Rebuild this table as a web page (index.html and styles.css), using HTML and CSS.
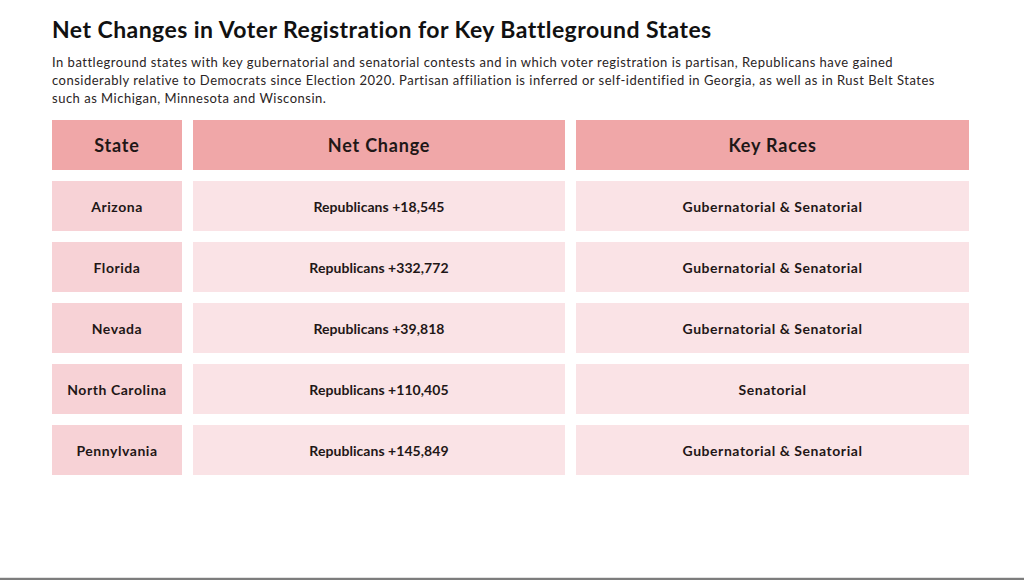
FILE: index.html
```html
<!DOCTYPE html>
<html lang="en">
<head>
<meta charset="utf-8">
<title>Net Changes in Voter Registration</title>
<link rel="stylesheet" href="styles.css">
</head>
<body>
<main class="page">
  <h1 class="title">Net Changes in Voter Registration for Key Battleground States</h1>
  <p class="intro">In battleground states with key gubernatorial and senatorial contests and in which voter registration is partisan, Republicans have gained<br>considerably relative to Democrats since Election 2020. Partisan affiliation is inferred or self-identified in Georgia, as well as in Rust Belt States<br>such as Michigan, Minnesota and Wisconsin.</p>
  <div class="table">
    <div class="cell head">State</div>
    <div class="cell head">Net Change</div>
    <div class="cell head">Key Races</div>

    <div class="cell state">Arizona</div>
    <div class="cell body num">Republicans +18,545</div>
    <div class="cell body">Gubernatorial &amp; Senatorial</div>

    <div class="cell state">Florida</div>
    <div class="cell body num">Republicans +332,772</div>
    <div class="cell body">Gubernatorial &amp; Senatorial</div>

    <div class="cell state">Nevada</div>
    <div class="cell body num">Republicans +39,818</div>
    <div class="cell body">Gubernatorial &amp; Senatorial</div>

    <div class="cell state">North Carolina</div>
    <div class="cell body num">Republicans +110,405</div>
    <div class="cell body">Senatorial</div>

    <div class="cell state">Pennylvania</div>
    <div class="cell body num">Republicans +145,849</div>
    <div class="cell body">Gubernatorial &amp; Senatorial</div>
  </div>
</main>
<footer class="edge"></footer>
</body>
</html>
```

FILE: styles.css
```css
* { box-sizing: border-box; }
html, body { margin: 0; padding: 0; }
body {
  width: 1024px;
  height: 580px;
  background: #ffffff;
  font-family: "Lato", "Open Sans", sans-serif;
  color: #1a1414;
  display: flex;
  flex-direction: column;
  overflow: hidden;
}
.page {
  flex: 1;
  padding: 14px 0 0 52px;
}
.title {
  margin: 0;
  font-size: 23px;
  font-weight: 700;
  line-height: 30px;
  letter-spacing: 0.45px;
  color: #111;
}
.intro {
  margin: 9px 0 0 0;
  font-size: 13px;
  line-height: 18px;
  color: #2a2424;
  letter-spacing: 0.5px;
  white-space: nowrap;
}
.table {
  margin-top: 13px;
  width: 917px;
  display: grid;
  grid-template-columns: 130px 372px 393px;
  grid-auto-rows: 50px;
  column-gap: 11px;
  row-gap: 11px;
}
.cell {
  display: flex;
  align-items: center;
  justify-content: center;
  font-weight: 700;
  font-size: 14px;
  letter-spacing: 0.55px;
  color: #1f1717;
}
.head {
  background: #f0a7a8;
  font-size: 18px;
  letter-spacing: 0.8px;
}
.state { background: #f7d2d6; }
.body { background: #fae3e6; }
.num { letter-spacing: 0.05px; }
.edge {
  height: 3px;
  border-top: 1px solid #e2e2e2;
  background: #7d7d7d;
}
```
